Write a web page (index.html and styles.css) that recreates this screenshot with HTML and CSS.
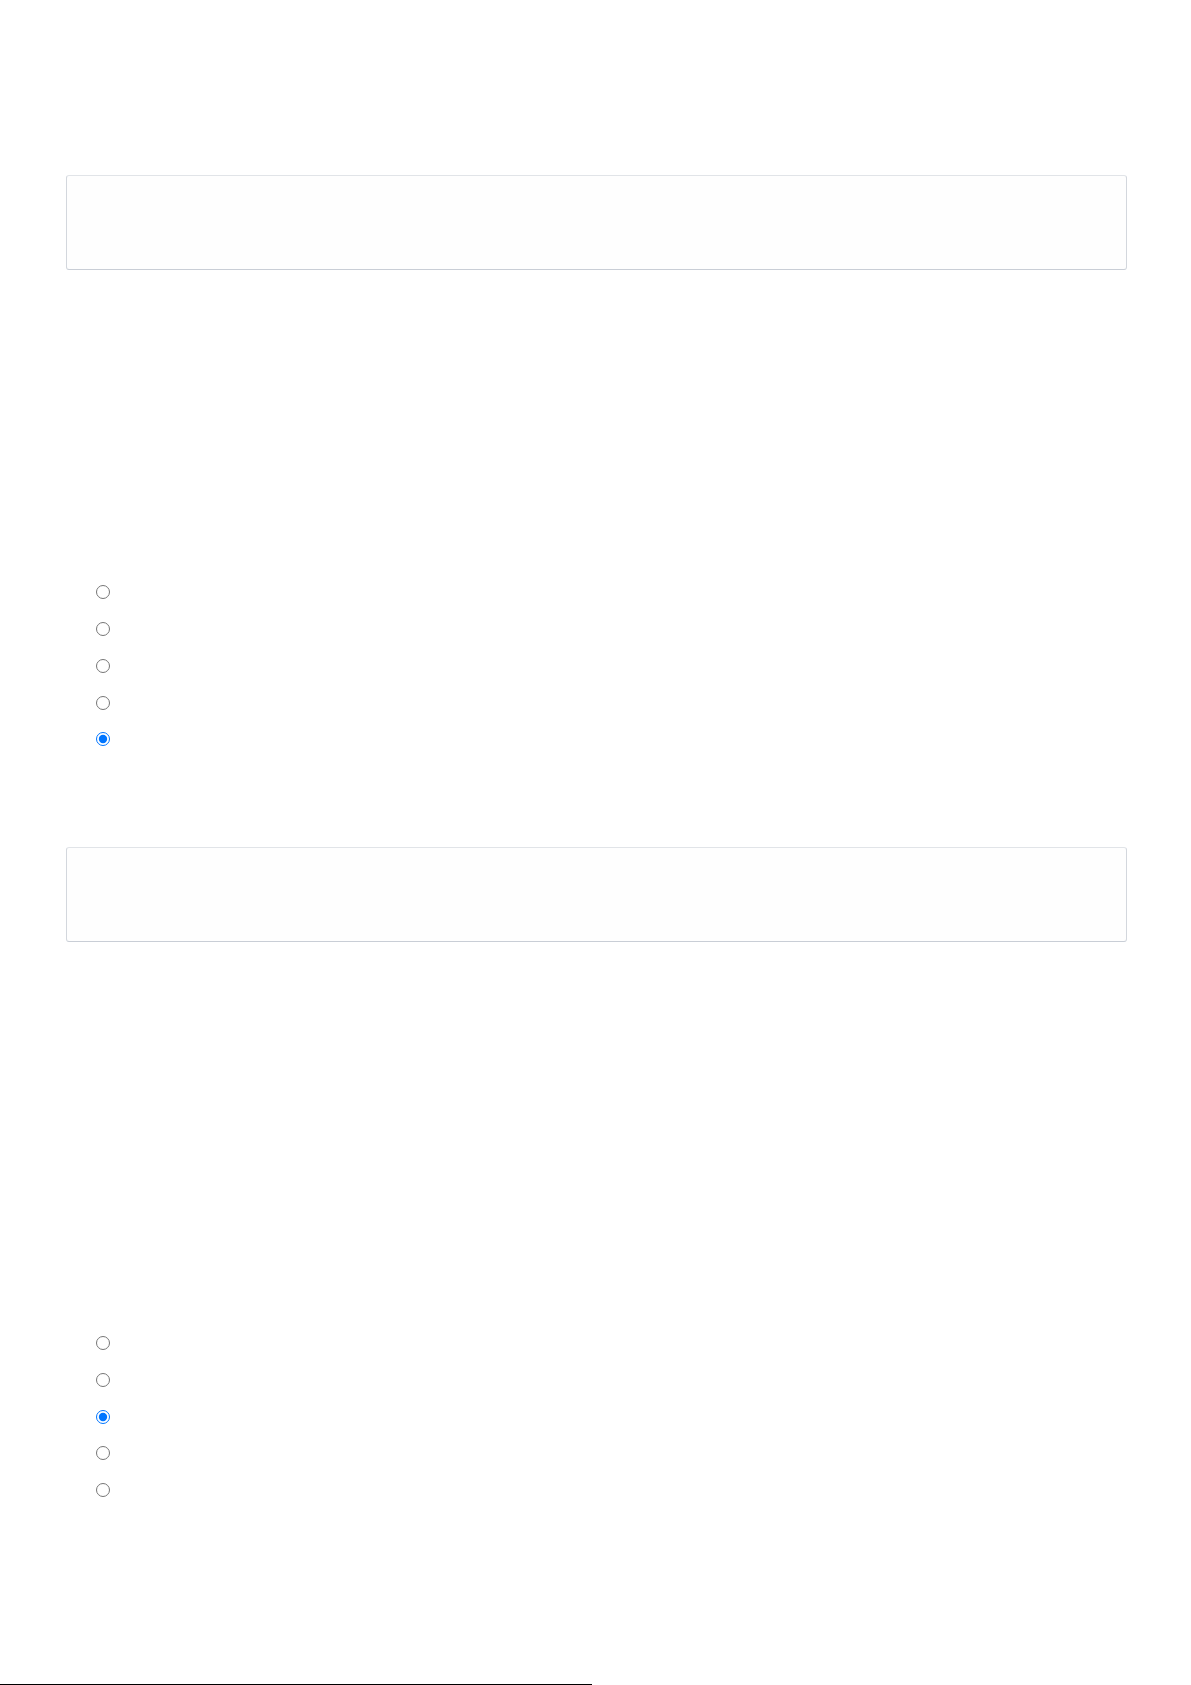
FILE: index.html
```html
<!DOCTYPE html>
<html lang="en">
<head>
<meta charset="utf-8">
<title>Form</title>
<link rel="stylesheet" href="styles.css">
</head>
<body>
<main class="page">
  <div class="field-box first"></div>
  <div class="radio-group first-group">
    <label class="radio-row"><input type="radio" name="q1"></label>
    <label class="radio-row"><input type="radio" name="q1"></label>
    <label class="radio-row"><input type="radio" name="q1"></label>
    <label class="radio-row"><input type="radio" name="q1"></label>
    <label class="radio-row"><input type="radio" name="q1" checked></label>
  </div>
  <div class="field-box second"></div>
  <div class="radio-group second-group">
    <label class="radio-row"><input type="radio" name="q2"></label>
    <label class="radio-row"><input type="radio" name="q2"></label>
    <label class="radio-row"><input type="radio" name="q2" checked></label>
    <label class="radio-row"><input type="radio" name="q2"></label>
    <label class="radio-row"><input type="radio" name="q2"></label>
  </div>
  <div class="bottom-rule"></div>
</main>
</body>
</html>
```

FILE: styles.css
```css
html, body {
  margin: 0;
  padding: 0;
  background: #ffffff;
  font-family: "Liberation Sans", Arial, sans-serif;
  height: 1685px;
  overflow: hidden;
}

.page {
  display: flex;
  flex-direction: column;
  padding-top: 175px;
  height: 1685px;
  box-sizing: border-box;
}

.field-box {
  margin-left: 66px;
  width: 1061px;
  height: 95px;
  box-sizing: border-box;
  border: 1px solid #d3d7dd;
  border-top-color: #e1e4e8;
  border-bottom-color: #c9ced6;
  border-radius: 3px;
  background: #fefefe;
  flex: none;
}

.radio-group {
  display: flex;
  flex-direction: column;
  padding-left: 96px;
  flex: none;
}

.first-group { margin-top: 304px; }
.second { margin-top: 89px; }
.second-group { margin-top: 383px; }

.radio-row {
  height: 36.75px;
  display: flex;
  align-items: center;
}

.radio-row input {
  margin: 0;
  width: 14px;
  height: 14px;
}

.bottom-rule {
  margin-top: auto;
  width: 592px;
  height: 1px;
  background: #000000;
  flex: none;
}
```
